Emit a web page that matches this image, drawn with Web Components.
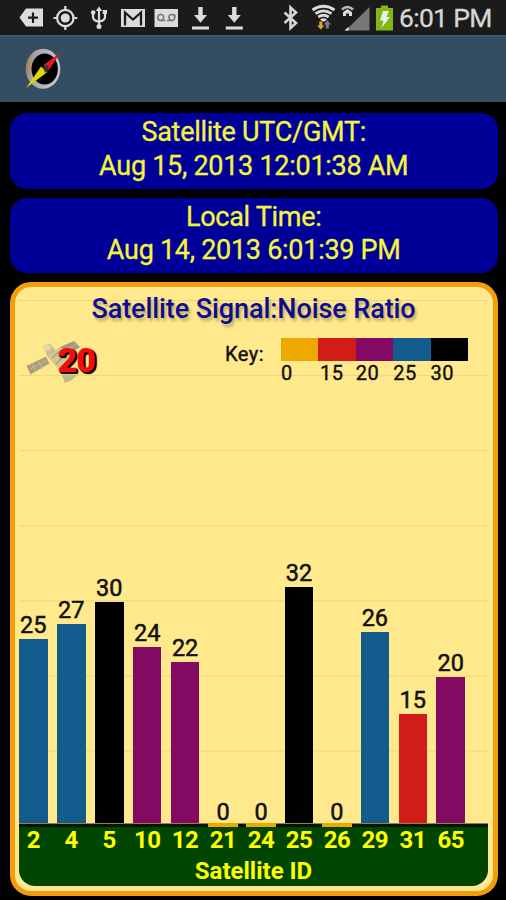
<!DOCTYPE html>
<html lang="en">
<head>
<meta charset="utf-8">
<title>Satellite Signal</title>
<style>
  body {
    margin: 0;
    background: #000;
    font-family: Roboto, "Noto Sans", sans-serif;
  }
</style>
</head>
<body>
<gps-screen>
  <status-bar slot="status" time="6:01 PM"></status-bar>
  <app-bar slot="bar"></app-bar>
  <time-card label="Satellite UTC/GMT:">Aug 15, 2013 12:01:38 AM</time-card>
  <time-card label="Local Time:">Aug 14, 2013 6:01:39 PM</time-card>
  <signal-chart
    count="20"
    axis="Satellite ID"
    values="2:25,4:27,5:30,10:24,12:22,21:0,24:0,25:32,26:0,29:26,31:15,65:20">
    Satellite Signal:Noise Ratio
    <signal-key slot="key"></signal-key>
  </signal-chart>
</gps-screen>

<script>
const LEVELS = [
  { from: 0, color: '#eea900' },
  { from: 15, color: '#d21c18' },
  { from: 20, color: '#830a62' },
  { from: 25, color: '#125b8d' },
  { from: 30, color: '#000' },
];

const UNIT = 7.5;

function colorFor(value) {
  return LEVELS.filter((level) => value >= level.from).pop().color;
}

class GpsScreen extends HTMLElement {
  constructor() {
    super();
    this.attachShadow({ mode: 'open' });
    this.shadowRoot.innerHTML = `
      <style>
        :host {
          display: flex;
          flex-direction: column;
          width: 506px;
          height: 900px;
          overflow: hidden;
          background: #000;
        }
        main {
          display: flex;
          flex-direction: column;
          gap: 9px;
          padding: 11px 8.5px 0 10px;
        }
      </style>
      <slot name="status"></slot>
      <slot name="bar"></slot>
      <main><slot></slot></main>
    `;
  }
}

class StatusBar extends HTMLElement {
  constructor() {
    super();
    this.attachShadow({ mode: 'open' });
  }

  connectedCallback() {
    this.shadowRoot.innerHTML = `
      <style>
        :host {
          display: flex;
          justify-content: space-between;
          align-items: center;
          box-sizing: border-box;
          height: 35px;
          padding: 0 13px 0 17px;
          background: #1b1b1b;
          color: #d6d6d6;
        }
        svg { display: block; }
        time {
          width: 94px;
          font-size: 26.5px;
          line-height: 35px;
          white-space: nowrap;
          letter-spacing: -0.7px;
          -webkit-text-stroke: 0.3px;
        }
        .right { display: flex; }
      </style>
      <svg width="230" height="35" viewBox="17 0 230 35" fill="#dcdcdc">
        <path d="M19.500 17.500 26 8.500H43V26.500H26Z"/>
        <path d="M33 12.500V23M28 17.700H38" stroke="#1b1b1b" stroke-width="2.200"/>
        <g fill="none" stroke="#dcdcdc" stroke-width="2.200">
          <circle cx="65.300" cy="18" r="8.200"/>
          <path d="M65.300 6V11M65.300 25V30M53.500 18H58M72.600 18H77.300"/>
        </g>
        <circle cx="65.300" cy="18" r="4.600"/>
        <path d="M99 10V27M93 13V17Q93 20.500 99 21.700M105 12V17Q105 20.500 99 21.700" fill="none" stroke="#dcdcdc" stroke-width="2.200"/>
        <path d="M95.800 11 99 6.500 102.200 11Z"/>
        <circle cx="99" cy="26.500" r="2.500"/>
        <circle cx="93.200" cy="12.500" r="2.300"/>
        <path d="M102.700 10H107V14H102.700Z"/>
        <path d="M121 9H145V27H121Z"/>
        <path d="M125 25.500V12.500L133 19.500 141 12.500V25.500" fill="none" stroke="#1b1b1b" stroke-width="2.300"/>
        <path d="M154.500 9H178V27H154.500Z"/>
        <g fill="none" stroke="#77777a" stroke-width="1.500">
          <circle cx="160.700" cy="17.500" r="2.900"/>
          <circle cx="171.800" cy="17.500" r="2.900"/>
          <path d="M160.700 20.500H165.500M167 20.500H171.800M174.700 17.500V14"/>
        </g>
        <path id="dl" d="M198.300 7H202.700V15H207L200.500 22.700 194 15H198.300ZM192 26.500H209V29.500H192Z"/>
        <use href="#dl" x="33.800"/>
      </svg>
      <div class="right">
        <svg width="119" height="35" viewBox="280 0 119 35">
          <path d="M284.500 12.500 296 23 290.500 28V7.500L296 12.500 284.500 23" fill="none" stroke="#d6d6d6" stroke-width="2.600"/>
          <g fill="none" stroke="#dcdcdc" stroke-width="2.800">
            <path d="M312.500 10Q323.500 2.500 334.500 10M315.500 13.700Q323.500 8 331.500 13.700M318.300 17Q323.500 13.500 328.700 17"/>
          </g>
          <path d="M320 19.500Q323.500 17 327 19.500L324.500 21.500H322.500Z" fill="#dcdcdc"/>
          <path d="M319.300 21.500H322.300V25.500H324.500L320.800 29.500 317 25.500H319.300Z" fill="#e9a035"/>
          <path d="M325.800 28.500V24.500H323.800L327.300 20.300 331 24.500H328.800V28.500Z" fill="#7d7d7d"/>
          <path d="M369.500 7V30.500H345.500Z" fill="#777"/>
          <path d="M348.500 27V30.500H344.500Z" fill="#eee"/>
          <path d="M342 9.500Q347.500 4.500 353 9.500" fill="none" stroke="#bbb" stroke-width="2.600"/>
          <path d="M343 16V12.300L347.500 9 352 12.300V16H349V13.500H346V16Z" fill="#ddd"/>
          <path d="M376 8H381V5.500H388V8H393V30.500H376Z" fill="#7fb80e"/>
          <path d="M383 11H389L386.500 17H390L381.500 28 383.500 20.500H380Z" fill="#eee"/>
        </svg>
        <time>${this.getAttribute('time')}</time>
      </div>
    `;
  }
}

class AppBar extends HTMLElement {
  constructor() {
    super();
    this.attachShadow({ mode: 'open' });
    this.shadowRoot.innerHTML = `
      <style>
        :host {
          display: flex;
          box-sizing: border-box;
          height: 67px;
          padding-left: 22px;
          background: #344d62;
          border-top: 2px solid #3e586d;
        }
      </style>
      <svg width="44" height="64" viewBox="22 37 44 64">
        <defs>
          <linearGradient id="rim" x2="1" y2="0.200">
            <stop offset="0" stop-color="#a06a30"/>
            <stop offset="0.300" stop-color="#aaa6aa"/>
            <stop offset="1" stop-color="#c4c4d2"/>
          </linearGradient>
        </defs>
        <ellipse cx="43" cy="68.800" rx="17.300" ry="20" fill="url(#rim)"/>
        <ellipse cx="44.700" cy="69" rx="13.200" ry="15.500" fill="#000"/>
        <path d="M60.500 52.500 43.500 65 48.500 70.500Z" fill="#e01b18"/>
        <path d="M26 88 41 66.500 47.500 72Z" fill="#dcd900"/>
        <path d="M42.500 67.500 47 64.500 49 69 45.500 73Z" fill="#3a3232"/>
      </svg>
    `;
  }
}

class TimeCard extends HTMLElement {
  constructor() {
    super();
    this.attachShadow({ mode: 'open' });
  }

  connectedCallback() {
    this.shadowRoot.innerHTML = `
      <style>
        :host {
          display: block;
          box-sizing: border-box;
          height: 75.500px;
          padding-top: 3px;
          border-radius: 17px;
          background: #000099;
          color: #f5f53c;
          font-size: 27px;
          line-height: 33.500px;
          letter-spacing: -0.280px;
          text-align: center;
          white-space: nowrap;
          -webkit-text-stroke: 0.300px;
        }
        div { height: 33.500px; }
      </style>
      <div>${this.getAttribute('label')}</div>
      <div><slot></slot></div>
    `;
  }
}

class SignalKey extends HTMLElement {
  constructor() {
    super();
    this.attachShadow({ mode: 'open' });
    this.shadowRoot.innerHTML = `
      <style>
        :host {
          display: flex;
          gap: 17px;
          color: #111;
          font-size: 20px;
          letter-spacing: 0.500px;
          -webkit-text-stroke: 0.400px;
        }
        .title { line-height: 32px; }
        .scale {
          display: grid;
          grid-template-columns: repeat(5, 37.400px);
          grid-template-rows: 23px 24px;
        }
        .scale span { line-height: 25px; }
        .scale span:nth-of-type(2) { padding-left: 1.500px; }
      </style>
      <span class="title">Key:</span>
      <div class="scale">
        ${LEVELS.map((level) => `<i style="background: ${level.color}"></i>`).join('')}
        ${LEVELS.map((level) => `<span>${level.from}</span>`).join('')}
      </div>
    `;
  }
}

class SignalBar extends HTMLElement {
  constructor() {
    super();
    this.attachShadow({ mode: 'open' });
  }

  connectedCallback() {
    const value = Number(this.getAttribute('value'));
    // bars are measured from 3.5px below the top of the axis
    const height = Math.max(value * UNIT - 3.5, 0);
    this.shadowRoot.innerHTML = `
      <style>
        :host {
          display: flex;
          flex-direction: column;
          align-items: center;
          color: #111;
          font-size: 23.500px;
          line-height: 28px;
          -webkit-text-stroke: 0.500px;
        }
        span { height: ${value ? 28 : 25}px; }
        i {
          width: 100%;
          height: ${height}px;
          background: ${colorFor(value)};
        }
      </style>
      <span>${value}</span>
      <i></i>
    `;
  }
}

class SignalChart extends HTMLElement {
  constructor() {
    super();
    this.attachShadow({ mode: 'open' });
  }

  connectedCallback() {
    const bars = this.getAttribute('values').split(',').map((pair) => pair.split(':'));
    this.shadowRoot.innerHTML = `
      <style>
        :host {
          display: flex;
          flex-direction: column;
          box-sizing: border-box;
          height: 614px;
          padding: 0 4.500px 5px 4px;
          border: 5px solid #f29c0e;
          border-radius: 21px;
          background: #ffe98c;
        }
        .plot {
          display: flex;
          flex: none;
          flex-direction: column;
          height: 536px;
          background: linear-gradient(#e8d682 1.200px, transparent 1.200px) 0 13px / 100% 75.100px;
        }
        h1 {
          margin: 6px 0 0;
          color: #0e0b92;
          font-size: 27px;
          font-weight: 500;
          line-height: 32px;
          letter-spacing: -0.080px;
          text-align: center;
          text-shadow: 2px 3px 3px #0004;
          white-space: nowrap;
        }
        .info {
          display: flex;
          justify-content: space-between;
          height: 50px;
          padding: 13px 20px 0 4px;
        }
        .count { display: flex; }
        .count b {
          margin-left: -41.500px;
          color: #f40d0d;
          font-size: 34px;
          font-weight: 900;
          line-height: 45px;
          letter-spacing: -1px;
          text-shadow: 2px 2px 1px #000, 1px 1px 0 #000, 2px 1px 1px #000;
        }
        .bars, .ids {
          display: grid;
          grid-template-columns: repeat(12, 28.600px);
          column-gap: 9.370px;
        }
        .bars {
          flex: 1;
          align-items: end;
        }
        footer {
          flex: 1;
          min-height: 0;
          background: #004500;
          border-radius: 0 0 16px 16px;
          color: #ff0;
          font-size: 24px;
          font-weight: 700;
          text-align: center;
        }
        .ids {
          justify-items: center;
          line-height: 26px;
          letter-spacing: -0.500px;
        }
        .ticks {
          justify-items: stretch;
          height: 4px;
          background: linear-gradient(#8f8450 1px, #081400 1px);
        }
        .ticks .zero {
          margin: 0 -1px;
          height: 4px;
          background: #eea900;
        }
        .axis {
          font-size: 24px;
          line-height: 36px;
        }
      </style>
      <div class="plot">
        <h1><slot></slot></h1>
        <div class="info">
          <div class="count">
            <svg width="76" height="46" viewBox="23 335 76 46">
              <path d="M26.500 363 46 353.500 49.500 360.500 30.500 371.500Z" fill="#a8a07c"/>
              <path d="M28.500 367 47 357M32 360 36 369M38 357 42 366" stroke="#c2b88a"/>
              <path d="M60 344 74 338 80 344 67 352Z" fill="#a29a78"/>
              <path d="M63 348 77 341" stroke="#c2b88a"/>
              <path d="M47 353 60 344 68 350 72 362 60 368Z" fill="#d3c690"/>
              <path d="M52 355 61 347M56 361 66 351" stroke="#aaa17a" stroke-width="1.500"/>
              <path d="M62 372 77 372 72 377 65 380Z" fill="#c3b88a"/>
              <path d="M43 343 50 340.500 56 348 48 354Z" fill="#cabe90"/>
              <ellipse cx="47" cy="344.500" rx="4" ry="3.200" fill="#e5daa4"/>
            </svg>
            <b>${this.getAttribute('count')}</b>
          </div>
          <slot name="key"></slot>
        </div>
        <div class="bars">
          ${bars.map(([, value]) => `<signal-bar value="${value}"></signal-bar>`).join('')}
        </div>
      </div>
      <footer>
        <div class="ids ticks">
          ${bars.map(([, value]) => `<i class="${value === '0' ? 'zero' : ''}"></i>`).join('')}
        </div>
        <div class="ids">
          ${bars.map(([id]) => `<span>${id}</span>`).join('')}
        </div>
        <div class="axis">${this.getAttribute('axis')}</div>
      </footer>
    `;
  }
}

customElements.define('gps-screen', GpsScreen);
customElements.define('status-bar', StatusBar);
customElements.define('app-bar', AppBar);
customElements.define('time-card', TimeCard);
customElements.define('signal-key', SignalKey);
customElements.define('signal-bar', SignalBar);
customElements.define('signal-chart', SignalChart);
</script>
</body>
</html>
